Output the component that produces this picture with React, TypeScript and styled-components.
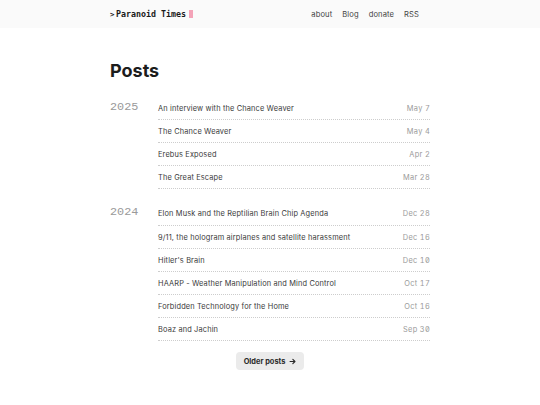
import React from "react";
import styled, { createGlobalStyle } from "styled-components";

const Global = createGlobalStyle`
  html, body { margin: 0; padding: 0; background: #ffffff; }
  body { font-family: Inter, "Noto Sans", sans-serif; color: #222; }
  * { box-sizing: border-box; }
`;

const Header = styled.header`
  background: #fafafa;
  height: 28px;
  display: flex;
  align-items: center;
`;

const HeaderInner = styled.div`
  width: 320px;
  margin: 0 auto;
  display: flex;
  align-items: center;
  justify-content: space-between;
`;

const Brand = styled.a`
  font-family: "DejaVu Sans Mono", "Liberation Mono", monospace;
  font-weight: bold;
  font-size: 8.3px;
  color: #1a1a1a;
  text-decoration: none;
  display: flex;
  align-items: center;
  white-space: pre;
`;

const Prompt = styled.span`
  font-size: 7.4px;
  margin-right: 1.5px;
`;

const Cursor = styled.span`
  display: inline-block;
  width: 4px;
  height: 8px;
  background: #f4a3b8;
  margin-left: 3px;
`;

const Nav = styled.nav`
  display: flex;
  gap: 10px;
  margin-right: 11px;
`;

const NavLink = styled.a`
  font-size: 7.6px;
  color: #444;
  text-decoration: none;
  letter-spacing: 0.1px;
`;

const Main = styled.main`
  width: 320px;
  margin: 0 auto;
  padding-top: 32px;
`;

const Title = styled.h1`
  font-size: 18px;
  font-weight: 700;
  line-height: 21.6px;
  margin: 0 0 15px;
  color: #1c1c1c;
`;

const Group = styled.section`
  display: grid;
  grid-template-columns: 48px 1fr;
  margin-bottom: 13px;
`;

const Year = styled.div`
  font-family: "Liberation Mono", "DejaVu Sans Mono", monospace;
  font-size: 11.8px;
  color: #9a9a9a;
  padding-top: 4px;
  line-height: 12px;
`;

const List = styled.ul`
  list-style: none;
  margin: 0;
  padding: 0;
`;

const Row = styled.li`
  display: flex;
  justify-content: space-between;
  align-items: center;
  height: 23.2px;
  padding-top: 1px;
  border-bottom: 1px dotted #cdcdcd;
  font-size: 7.4px;
  letter-spacing: 0.15px;
`;

const PostTitle = styled.a`
  color: #3a3a3a;
  text-decoration: none;
`;

const PostDate = styled.span`
  color: #9a9a9a;
  font-feature-settings: "zero" 1, "tnum" 1;
  letter-spacing: 0.3px;
`;

const Footer = styled.div`
  display: flex;
  justify-content: center;
  margin-top: -2px;
`;

const OlderButton = styled.a`
  background: #ebebeb;
  border-radius: 4px;
  height: 18px;
  padding: 0 8px;
  display: flex;
  align-items: center;
  gap: 4px;
  font-size: 7.4px;
  font-weight: 700;
  color: #2a2a2a;
  text-decoration: none;
`;

const groups: { year: string; posts: [string, string][] }[] = [
  {
    year: "2025",
    posts: [
      ["An interview with the Chance Weaver", "May 7"],
      ["The Chance Weaver", "May 4"],
      ["Erebus Exposed", "Apr 2"],
      ["The Great Escape", "Mar 28"],
    ],
  },
  {
    year: "2024",
    posts: [
      ["Elon Musk and the Reptilian Brain Chip Agenda", "Dec 28"],
      ["9/11, the hologram airplanes and satellite harassment", "Dec 16"],
      ["Hitler's Brain", "Dec 10"],
      ["HAARP - Weather Manipulation and Mind Control", "Oct 17"],
      ["Forbidden Technology for the Home", "Oct 16"],
      ["Boaz and Jachin", "Sep 30"],
    ],
  },
];

export default function App() {
  return (
    <>
      <Global />
      <Header>
        <HeaderInner>
          <Brand href="#">
            <Prompt>{">"}</Prompt>
            {"Paranoid Times"}
            <Cursor />
          </Brand>
          <Nav>
            <NavLink href="#">about</NavLink>
            <NavLink href="#">Blog</NavLink>
            <NavLink href="#">donate</NavLink>
            <NavLink href="#">RSS</NavLink>
          </Nav>
        </HeaderInner>
      </Header>
      <Main>
        <Title>Posts</Title>
        {groups.map((g) => (
          <Group key={g.year}>
            <Year>{g.year}</Year>
            <List>
              {g.posts.map(([t, d]) => (
                <Row key={t}>
                  <PostTitle href="#">{t}</PostTitle>
                  <PostDate>{d}</PostDate>
                </Row>
              ))}
            </List>
          </Group>
        ))}
        <Footer>
          <OlderButton href="#">
            Older posts
            <svg width="7" height="7" viewBox="0 0 10 10" fill="none" stroke="#2a2a2a" strokeWidth="1.6" strokeLinecap="round" strokeLinejoin="round">
              <path d="M1.5 5h7M5.5 2l3 3-3 3" />
            </svg>
          </OlderButton>
        </Footer>
      </Main>
    </>
  );
}
